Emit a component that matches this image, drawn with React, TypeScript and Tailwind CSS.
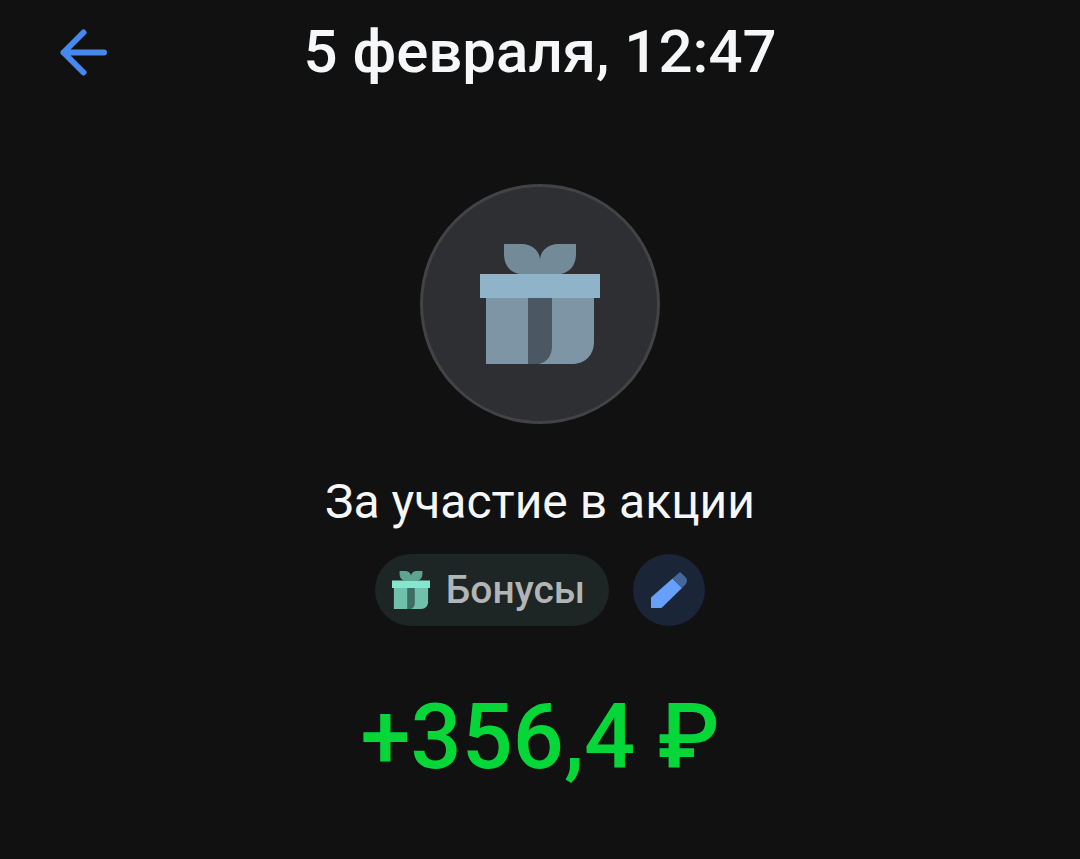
const Gift = ({ className, main, lid, bow, dark }: { className: string; main: string; lid: string; bow: string; dark: string }) => (
  <svg viewBox="0 0 120 120" className={className} aria-hidden="true">
    <path fill={bow} d="M24 0h18c10 0 18 7 18 16C60 7 68 0 78 0h18v10c0 11-6 18-15 20H39C30 28 24 21 24 10z" />
    <path fill={main} d="M6 54h108v44c0 13-9 22-22 22H6z" />
    <path fill={dark} d="M48 54h24v48c0 10-5 16-13 18H48z" />
    <path fill={lid} d="M0 30h120v24H0z" />
  </svg>
);

export default function App() {
  return (
    <div className="min-h-screen bg-[#111111] font-['Roboto',sans-serif] text-[#f6f7f8]">
      <header className="grid grid-cols-[1fr_auto_1fr] items-center px-[60px] pt-4">
        <button type="button" aria-label="Назад" className="justify-self-start">
          <svg viewBox="0 0 48 48" className="size-12" fill="none" stroke="#4688f0" strokeWidth="6" strokeLinecap="round" strokeLinejoin="round">
            <path d="M44 24.500H3.500M23.500 4.500L3.500 24.500l20 20" />
          </svg>
        </button>
        <h1 className="text-[60px] leading-[72px] font-medium">5 февраля, 12:47</h1>
      </header>
      <main className="flex flex-col items-center pt-24">
        <div className="flex size-60 items-center justify-center rounded-full border-3 border-[#434346] bg-[#2e2f33]">
          <Gift className="size-[120px]" main="#7d95a5" lid="#8fb3c9" bow="#738a98" dark="#4b5863" />
        </div>
        <h2 className="mt-[50px] text-[48px] leading-[56px] font-normal">За участие в акции</h2>
        <div className="mt-6 flex items-center gap-6">
          <button type="button" className="flex h-[72px] items-center gap-4 rounded-full bg-[#1e2625] pr-6 pl-[17px] text-[39px] font-medium text-[#b2b5b5]">
            <Gift className="size-[38px]" main="#6fc1ab" lid="#84e6cd" bow="#5fa391" dark="#416c63" />
            Бонусы
          </button>
          <button type="button" aria-label="Изменить" className="flex size-[72px] items-center justify-center rounded-full bg-[#1b2538]">
            <svg viewBox="0 0 36 36" className="size-9">
              <path fill="#67a0fa" d="M0 36V25.500L21.500 6.500l9.500 9.500L10.500 36z" />
              <path fill="#46659a" d="M21.500 6.500L29 0l5.500 5q3 3.500 0 7.500L31 16z" />
            </svg>
          </button>
        </div>
        <p className="mt-[58px] text-[90px] leading-[108px] font-medium text-[#06d739]">+356,4 ₽</p>
      </main>
    </div>
  );
}
